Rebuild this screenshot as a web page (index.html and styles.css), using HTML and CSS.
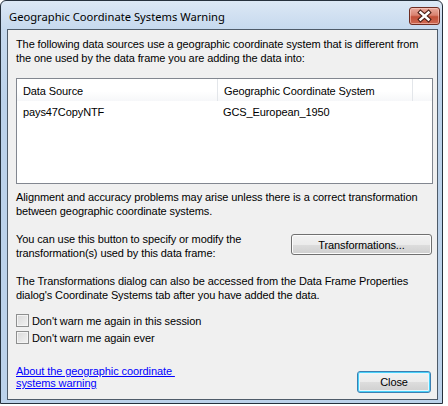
FILE: index.html
```html
<!DOCTYPE html>
<html lang="en">
<head>
<meta charset="utf-8">
<title>Geographic Coordinate Systems Warning</title>
<link rel="stylesheet" href="styles.css">
</head>
<body>
<div class="window">
  <div class="titlebar">
    <span class="title">Geographic Coordinate Systems Warning</span>
    <button class="caption-close" aria-label="Close">
      <svg width="29" height="16" viewBox="0 0 29 16">
        <path d="M10.5 4.5 L18.5 11.5 M18.5 4.5 L10.5 11.5" stroke="#4a1e16" stroke-width="4.6" stroke-linecap="square"/>
        <path d="M10.5 4.5 L18.5 11.5 M18.5 4.5 L10.5 11.5" stroke="#ffffff" stroke-width="2.4" stroke-linecap="square"/>
      </svg>
    </button>
  </div>
  <div class="client">
    <p class="text intro">The following data sources use a geographic coordinate system that is different from<br>the one used by the data frame you are adding the data into:</p>

    <div class="listview">
      <div class="lv-head">
        <div class="lv-col lv-name">Data Source</div>
        <div class="lv-col lv-gcs">Geographic Coordinate System</div>
        <div class="lv-col lv-rest"></div>
      </div>
      <div class="lv-row">
        <div class="lv-cell lv-name">pays47CopyNTF</div>
        <div class="lv-cell lv-gcs">GCS_European_1950</div>
      </div>
    </div>

    <p class="text gap-s">Alignment and accuracy problems may arise unless there is a correct transformation<br>between geographic coordinate systems.</p>

    <div class="transform-row gap-l">
      <p class="text">You can use this button to specify or modify the<br>transformation(s) used by this data frame:</p>
      <button class="btn btn-transform">Transformations...</button>
    </div>

    <p class="text gap-l">The Transformations dialog can also be accessed from the Data Frame Properties<br>dialog's Coordinate Systems tab after you have added the data.</p>

    <div class="checks">
      <label class="check"><span class="box"></span>Don't warn me again in this session</label>
      <label class="check"><span class="box"></span>Don't warn me again ever</label>
    </div>

    <div class="footer">
      <a class="help-link" href="#">About the geographic coordinate&nbsp;<br>systems warning</a>
      <button class="btn btn-default">Close</button>
    </div>
  </div>
</div>
</body>
</html>
```

FILE: styles.css
```css
* { box-sizing: border-box; }

html, body {
  margin: 0;
  padding: 0;
  background: #ffffff;
}

body {
  font-family: "Liberation Sans", "DejaVu Sans", sans-serif;
  font-size: 11px;
  letter-spacing: -0.1px;
  color: #000;
}

/* outer window frame */
.window {
  width: 443px;
  height: 404px;
  border: 1px solid #26313d;
  border-radius: 6px 6px 0 0;
  background: linear-gradient(#dce8f5 0px, #c6d9ee 28px, #bcd2ea 100px, #bcd2ea 100%);
  display: flex;
  flex-direction: column;
  padding: 0 4px 3px 6px;
}

.titlebar {
  height: 28px;
  flex: none;
  display: flex;
  align-items: flex-start;
  justify-content: space-between;
  padding-left: 2px;
}

.title {
  font-family: "Noto Sans", "DejaVu Sans", sans-serif;
  font-size: 11.2px;
  letter-spacing: 0;
  line-height: 16px;
  margin-top: 8px;
  color: #000;
}

.caption-close {
  width: 31px;
  height: 18px;
  margin-top: 6px;
  margin-right: -2px;
  padding: 0;
  border: 1px solid #6e2c21;
  border-radius: 3px;
  background: linear-gradient(#e9ab9e 0%, #d98270 45%, #c24f38 55%, #cf6b55 100%);
  box-shadow: inset 0 0 0 1px rgba(255, 210, 200, 0.55);
  display: flex;
  align-items: center;
  justify-content: center;
}

.caption-close svg { display: block; }

/* client area */
.client {
  flex: 1;
  border: 1px solid #4e5b69;
  background: #f0f0f0;
  padding: 7px 4px 0 8px;
  display: flex;
  flex-direction: column;
}

.text {
  margin: 0;
  line-height: 14px;
}

.gap-s { margin-top: 6px; }
.gap-l { margin-top: 14px; }

/* list view */
.listview {
  margin-top: 13px;
  height: 106px;
  border: 1px solid #828790;
  background: #fff;
}

.lv-head {
  display: flex;
  height: 22px;
  background: linear-gradient(#ffffff 0%, #ffffff 55%, #f6f7f9 100%);
}

.lv-col {
  padding: 5px 6px 0;
  line-height: 14px;
  border-right: 1px solid #e3e6ea;
  white-space: nowrap;
}

.lv-row {
  display: flex;
}

.lv-cell {
  padding: 4px 6px 0;
  line-height: 14px;
  white-space: nowrap;
}

.lv-name { width: 201px; }
.lv-gcs { width: 195px; }
.lv-rest { flex: 1; border-right: none; }

.lv-row .lv-gcs { padding-left: 5px; }

/* transformations row */
.transform-row {
  display: flex;
  justify-content: space-between;
  align-items: flex-start;
}

.btn {
  font-family: inherit;
  font-size: 11px;
  letter-spacing: inherit;
  color: #000;
  padding: 0;
  border: 1px solid #707070;
  border-radius: 3px;
  background: linear-gradient(#f2f2f2 0%, #ebebeb 50%, #dddddd 50%, #cfcfcf 100%);
  box-shadow: inset 0 0 0 1px #fcfcfc;
}

.btn-transform {
  width: 141px;
  height: 21px;
  margin-top: 2px;
  margin-right: 1px;
}

/* checkboxes */
.checks {
  margin-top: 10px;
  display: flex;
  flex-direction: column;
}

.check {
  display: flex;
  align-items: center;
  height: 17px;
  line-height: 14px;
}

.box {
  width: 13px;
  height: 13px;
  margin-right: 3px;
  border: 1px solid #8e8f8f;
  background: linear-gradient(135deg, #d9d9d9 0%, #f2f2f2 100%);
  box-shadow: inset 0 0 0 1px #f4f4f4;
}

/* footer */
.footer {
  margin-top: 19px;
  display: flex;
  justify-content: space-between;
  align-items: flex-start;
}

.help-link {
  color: #0000ff;
  line-height: 12px;
  text-decoration: underline;
}

.btn-default {
  width: 74px;
  height: 22px;
  margin-top: 6px;
  margin-right: 2px;
  border: 1px solid #3c7fb1;
  box-shadow: inset 0 0 0 1px #48d0f8, inset 0 0 0 2px #e6f6fd;
}
```
